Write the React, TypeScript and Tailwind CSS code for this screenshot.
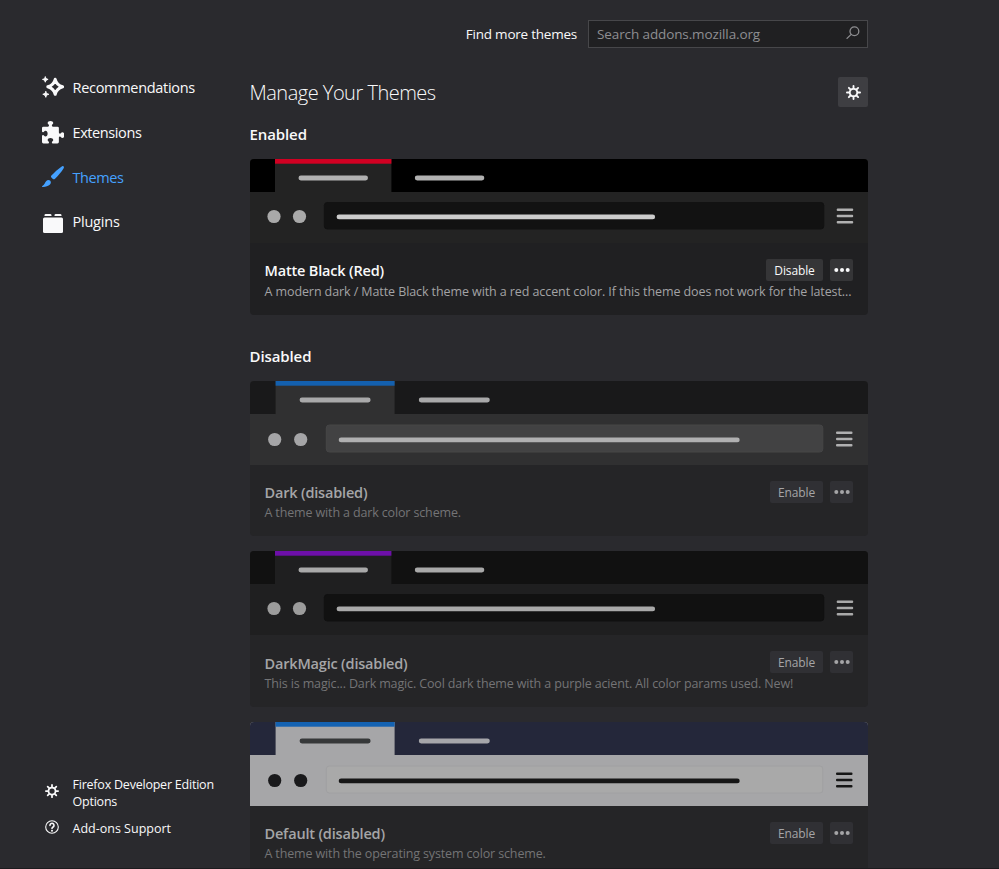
import React from 'react';

interface PreviewColors {
  frame: string;
  toolbar: string;
  accent: string;
  tabLine: string;
  inactiveLine: string;
  dots: string;
  field: string;
  fieldBorder: string;
  fieldLine: string;
}

interface Theme {
  name: string;
  description: string;
  enabled: boolean;
  wide: boolean;
  colors: PreviewColors;
}

const enabledThemes: Theme[] = [
  {
    name: 'Matte Black (Red)',
    description:
      'A modern dark / Matte Black theme with a red accent color. If this theme does not work for the latest...',
    enabled: true,
    wide: false,
    colors: {
      frame: '#000000',
      toolbar: '#232323',
      accent: '#d10022',
      tabLine: '#b1b1b1',
      inactiveLine: '#b1b1b1',
      dots: '#a9a9a9',
      field: '#121212',
      fieldBorder: '#121212',
      fieldLine: '#cccccc',
    },
  },
];

const disabledThemes: Theme[] = [
  {
    name: 'Dark (disabled)',
    description: 'A theme with a dark color scheme.',
    enabled: false,
    wide: true,
    colors: {
      frame: '#19191a',
      toolbar: '#303031',
      accent: '#1460ae',
      tabLine: '#a9a9aa',
      inactiveLine: '#a9a9aa',
      dots: '#a5a5a7',
      field: '#424243',
      fieldBorder: '#464647',
      fieldLine: '#b0b0b1',
    },
  },
  {
    name: 'DarkMagic (disabled)',
    description: 'This is magic... Dark magic. Cool dark theme with a purple acient. All color params used. New!',
    enabled: false,
    wide: false,
    colors: {
      frame: '#111111',
      toolbar: '#1f1f20',
      accent: '#6d0fa9',
      tabLine: '#a9a9a9',
      inactiveLine: '#a9a9a9',
      dots: '#9c9c9c',
      field: '#111111',
      fieldBorder: '#111111',
      fieldLine: '#a9a9a9',
    },
  },
  {
    name: 'Default (disabled)',
    description: 'A theme with the operating system color scheme.',
    enabled: false,
    wide: true,
    colors: {
      frame: '#24273a',
      toolbar: '#a6a6a8',
      accent: '#1462b2',
      tabLine: '#363839',
      inactiveLine: '#a6a6aa',
      dots: '#19191b',
      field: '#a9a9a9',
      fieldBorder: '#a0a0a2',
      fieldLine: '#161616',
    },
  },
];

function GearIcon({ className }: { className?: string }) {
  return (
    <svg viewBox="0 0 16 16" fill="currentColor" className={className}>
      <path d="M15 7h-2.1a4.967 4.967 0 0 0-.732-1.753l1.49-1.49a1 1 0 0 0-1.414-1.414l-1.49 1.49A4.968 4.968 0 0 0 9 3.1V1a1 1 0 0 0-2 0v2.1a4.968 4.968 0 0 0-1.753.732l-1.49-1.49a1 1 0 0 0-1.414 1.415l1.49 1.49A4.967 4.967 0 0 0 3.1 7H1a1 1 0 0 0 0 2h2.1a4.968 4.968 0 0 0 .737 1.763c-.014.013-.032.017-.045.03l-1.45 1.45a1 1 0 1 0 1.414 1.414l1.45-1.45c.013-.013.018-.031.03-.045A4.968 4.968 0 0 0 7 12.9V15a1 1 0 0 0 2 0v-2.1a4.968 4.968 0 0 0 1.753-.732l1.49 1.49a1 1 0 0 0 1.414-1.414l-1.49-1.49A4.967 4.967 0 0 0 12.9 9H15a1 1 0 0 0 0-2zM5 8a3 3 0 1 1 3 3 3 3 0 0 1-3-3z" />
    </svg>
  );
}

function HelpIcon() {
  return (
    <svg viewBox="0 0 14 14" fill="none" stroke="currentColor" className="size-3.5">
      <circle cx="7" cy="7" r="6.3" strokeWidth="1.1" />
      <path d="M5 5.4a2 2 0 1 1 3.1 1.6c-.7.5-1.1.8-1.1 1.5" strokeWidth="1.6" strokeLinecap="round" />
      <circle cx="7" cy="10.7" r="1" fill="currentColor" stroke="none" />
    </svg>
  );
}

function SearchIcon() {
  return (
    <svg viewBox="0 0 14 14" fill="none" stroke="currentColor" strokeWidth="1.3" className="-mt-0.5 size-3.5">
      <circle cx="8.4" cy="5.2" r="4.4" />
      <path d="M5.2 8.4 1 12.4" strokeLinecap="round" />
    </svg>
  );
}

function SparkleIcon() {
  return (
    <svg viewBox="0 0 24 24" className="-mt-px size-6">
      <path
        d="M14.2 4.3c1 4.4 2.8 6.2 7.4 7.5-4.6 1.4-6.4 3.1-7.4 7.5-1-4.4-2.8-6.1-7.4-7.5 4.6-1.3 6.4-3.1 7.4-7.5z"
        fill="none"
        stroke="currentColor"
        strokeWidth="3"
        strokeLinejoin="round"
      />
      <path
        d="M4.3 1.6c.5 1.9 1 2.3 2.8 2.8-1.9.5-2.3 1-2.8 2.8-.5-1.9-1-2.3-2.8-2.8 1.9-.5 2.3-1 2.8-2.8zM4.8 16.3c.5 2 1.1 2.5 3 3-2 .5-2.5 1-3 3-.5-2-1.1-2.5-3-3 2-.5 2.5-1 3-3z"
        fill="currentColor"
        stroke="currentColor"
        strokeWidth="1"
        strokeLinejoin="round"
      />
    </svg>
  );
}

function PuzzleIcon() {
  return (
    <svg viewBox="0 0 16 16" fill="currentColor" className="ml-px size-[22.5px]">
      <path d="M14.5 8c-.971 0-1 1-1.75 1a.765.765 0 0 1-.75-.75V5a1 1 0 0 0-1-1H7.75A.765.765 0 0 1 7 3.25c0-.75 1-.779 1-1.75C8 .635 7.1 0 6 0S4 .635 4 1.5c0 .971 1 1 1 1.75a.765.765 0 0 1-.75.75H1a1 1 0 0 0-1 1v2.25A.765.765 0 0 0 .75 8c.75 0 .779-1 1.75-1C3.365 7 4 7.9 4 9s-.635 2-1.5 2c-.971 0-1-1-1.75-1a.765.765 0 0 0-.75.75V15a1 1 0 0 0 1 1h3.25a.765.765 0 0 0 .75-.75c0-.75-1-.779-1-1.75 0-.865.9-1.5 2-1.5s2 .635 2 1.5c0 .971-1 1-1 1.75a.765.765 0 0 0 .75.75H11a1 1 0 0 0 1-1v-3.25a.765.765 0 0 1 .75-.75c.75 0 .779 1 1.75 1 .865 0 1.5-.9 1.5-2s-.635-2-1.5-2z" />
    </svg>
  );
}

function BrushIcon() {
  return (
    <svg viewBox="0 0 24 24" fill="currentColor" className="size-6">
      <path d="M22.4 1.3c.8.6.6 1.5.1 2.3-2.2 3.6-5.3 7.2-8.7 10.3-.6.6-1.3.6-1.9.1l-1.5-1.5c-.6-.6-.5-1.3 0-1.9 3.1-3.4 6.5-6.5 10-8.9.7-.5 1.4-.8 2-.4z" />
      <path d="M5.3 15.9c1.1-1.1 2.7-1.3 3.8-.3 1.1 1.1 1 2.8-.1 3.9-1.8 1.9-5.1 2.6-7.6 2.4-.5-.1-.6-.6-.1-.9 2.2-1.2 2.5-3.6 4-5.1z" />
    </svg>
  );
}

function PluginIcon() {
  return (
    <svg viewBox="0 0 24 24" fill="currentColor" className="mt-0.5 size-6">
      <rect x="2" y="6.5" width="20" height="15.5" rx="1.5" />
      <path d="M3.5 5V4.3A1.3 1.3 0 0 1 4.8 3H9.2a1.3 1.3 0 0 1 1.3 1.3V5zM13.5 5V4.3A1.3 1.3 0 0 1 14.8 3H19.2a1.3 1.3 0 0 1 1.3 1.3V5z" />
    </svg>
  );
}

// Miniature browser window drawn in the theme's own colors
function ThemePreview({ colors, wide }: { colors: PreviewColors; wide: boolean }) {
  const tab = wide
    ? { x: 25.6, w: 119, line: 49.6, lineW: 71, next: 168.8 }
    : { x: 25, w: 116.4, line: 48.5, lineW: 69.5, next: 164.8 };
  const bar = wide
    ? { x: 76.3, y: 44, w: 496.5, h: 27, line: 88.7, lineW: 401, cy: 58.5, menu: 586 }
    : { x: 74.3, y: 43.5, w: 499.5, h: 26.5, line: 86.6, lineW: 318.5, cy: 57.5, menu: 586.7 };

  return (
    <svg viewBox="0 0 618 84" className="block h-[84px] w-full">
      <rect width="618" height="84" fill={colors.toolbar} />
      <rect width="618" height="33" fill={colors.frame} />
      <rect x={tab.x} width={tab.w} height="34" fill={colors.toolbar} />
      <rect x={tab.x} width={tab.w} height="4.7" fill={colors.accent} />
      <rect x={tab.line} y="16.6" width={tab.lineW} height="4.8" rx="2.4" fill={colors.tabLine} />
      <rect x={tab.next} y="16.6" width={tab.lineW} height="4.8" rx="2.4" fill={colors.inactiveLine} />
      <circle cx={wide ? 24.7 : 24} cy={bar.cy} r="6.6" fill={colors.dots} />
      <circle cx={wide ? 50.7 : 49.5} cy={bar.cy} r="6.6" fill={colors.dots} />
      <rect x={bar.x} y={bar.y} width={bar.w} height={bar.h} rx="3" fill={colors.field} stroke={colors.fieldBorder} />
      <rect x={bar.line} y={bar.cy - 2} width={bar.lineW} height="4.8" rx="2.4" fill={colors.fieldLine} />
      {[-7.3, -1.1, 5.1].map((dy) => (
        <rect
          key={dy}
          x={bar.menu}
          y={bar.cy + dy - 0.7}
          width="16.5"
          height="2.5"
          rx="1"
          fill={wide ? colors.fieldLine : colors.tabLine}
        />
      ))}
    </svg>
  );
}

function ThemeCard({ theme }: { theme: Theme }) {
  const on = theme.enabled;
  return (
    <article className={`h-[155.5px] w-[618px] shrink-0 overflow-hidden rounded-[4px] ${on ? 'bg-[#202022]' : 'bg-[#252527]'}`}>
      <ThemePreview colors={theme.colors} wide={theme.wide} />
      <div className="pt-4 pr-[15px] pl-[14.5px]">
        <div className="flex h-[22px] items-center">
          <h3
            className={`flex-1 whitespace-nowrap text-[14.5px] font-semibold tracking-[-0.18px] ${
              on ? 'pt-0.5 text-[#f9f9fa]' : 'pt-[3px] text-[#a5a5a7]'
            }`}
          >
            {theme.name}
          </h3>
          <button
            className={`mr-[7px] h-[22px] rounded-[2px] pt-0.5 text-[12px] tracking-[-0.12px] ${
              on ? 'w-[57px] bg-[#353537] text-[#f9f9fa]' : 'w-[53px] bg-[#303034] text-[#a5a5a7]'
            }`}
          >
            {on ? 'Disable' : 'Enable'}
          </button>
          <button
            aria-label="More options"
            className={`flex h-[22px] w-[23px] items-center justify-center rounded-[2px] ${
              on ? 'bg-[#353537] text-[#f9f9fa]' : 'bg-[#303034] text-[#a5a5a7]'
            }`}
          >
            <svg viewBox="0 0 16 4" fill="currentColor" className="h-1 w-4">
              <circle cx="2.3" cy="2" r="2" />
              <circle cx="8" cy="2" r="2" />
              <circle cx="13.7" cy="2" r="2" />
            </svg>
          </button>
        </div>
        <p
          className={`whitespace-nowrap pt-[0.7px] text-[12.5px] leading-5 ${
            on ? 'tracking-[-0.09px] text-[#a3a3a5]' : 'tracking-[-0.14px] text-[#747476]'
          }`}
        >
          {theme.description}
        </p>
      </div>
    </article>
  );
}

function Sidebar() {
  const items = [
    { label: 'Recommendations', icon: <SparkleIcon />, tracking: 'tracking-[-0.3px]' },
    { label: 'Extensions', icon: <PuzzleIcon />, tracking: 'tracking-[-0.4px]' },
    { label: 'Themes', icon: <BrushIcon />, tracking: 'tracking-[-0.42px]', active: true },
    { label: 'Plugins', icon: <PluginIcon />, tracking: 'tracking-[-0.22px]' },
  ];

  return (
    <aside className="flex w-[250px] shrink-0 flex-col justify-between pt-[65.2px] pb-[31.5px] pl-[40.5px]">
      <nav>
        {items.map((item) => (
          <a
            key={item.label}
            className={`flex h-[44.8px] items-center text-[14.5px] ${item.active ? 'text-[#45a1ff]' : 'text-[#f9f9fa]'}`}
          >
            <span className="flex w-8 shrink-0 items-center">{item.icon}</span>
            <span className={`pt-[0.5px] ${item.tracking}`}>{item.label}</span>
          </a>
        ))}
      </nav>
      <div className="flex flex-col gap-[10px] text-[12.5px] leading-[17px] text-[#f9f9fa]">
        <a className="flex items-center">
          <span className="flex w-8 shrink-0 pb-1 pl-1">
            <GearIcon className="size-3.5" />
          </span>
          <span className="tracking-[-0.22px]">
            Firefox Developer Edition
            <br />
            Options
          </span>
        </a>
        <a className="flex items-center">
          <span className="flex w-8 shrink-0 pb-0.5 pl-1">
            <HelpIcon />
          </span>
          <span>Add-ons Support</span>
        </a>
      </div>
    </aside>
  );
}

export default function App() {
  return (
    <div className="flex h-[869px] w-[999px] overflow-hidden border-b border-[#1c1b1e] bg-[#2a2a2e] font-['Open_Sans','Noto_Sans',sans-serif] text-[#f9f9fa]">
      <Sidebar />
      <main className="flex w-[618px] shrink-0 flex-col">
        <div className="mt-5 flex h-7 shrink-0 items-center justify-end text-[13.5px]">
          <label className="mr-[11px] whitespace-nowrap tracking-[-0.23px]">Find more themes</label>
          <div className="flex h-7 w-[280px] items-center justify-between border border-[#47474a] bg-[#202022] pr-[7px] pl-2 text-[#8e8e91]">
            <span className="tracking-[-0.11px]">Search addons.mozilla.org</span>
            <SearchIcon />
          </div>
        </div>

        <div className="mt-[29px] flex h-[30px] shrink-0 items-center justify-between">
          <h1 className="-ml-[0.5px] pt-0.5 text-[20px] font-light tracking-[-0.5px]">Manage Your Themes</h1>
          <button aria-label="Tools" className="flex size-[30px] items-center justify-center rounded-[2px] bg-[#3e3e42]">
            <GearIcon className="size-[15px]" />
          </button>
        </div>

        <h2 className="mt-4 -ml-[0.5px] h-[22px] shrink-0 text-[15px] leading-[22px] font-semibold tracking-[-0.1px]">Enabled</h2>
        <div className="mt-[14px] flex shrink-0 flex-col">
          {enabledThemes.map((theme) => (
            <ThemeCard key={theme.name} theme={theme} />
          ))}
        </div>

        <h2 className="mt-[30.5px] -ml-[0.5px] h-[22px] shrink-0 text-[15px] leading-[22px] font-semibold tracking-[-0.1px]">Disabled</h2>
        <div className="mt-[13.75px] flex flex-col gap-[15px]">
          {disabledThemes.map((theme) => (
            <ThemeCard key={theme.name} theme={theme} />
          ))}
        </div>
      </main>
    </div>
  );
}
